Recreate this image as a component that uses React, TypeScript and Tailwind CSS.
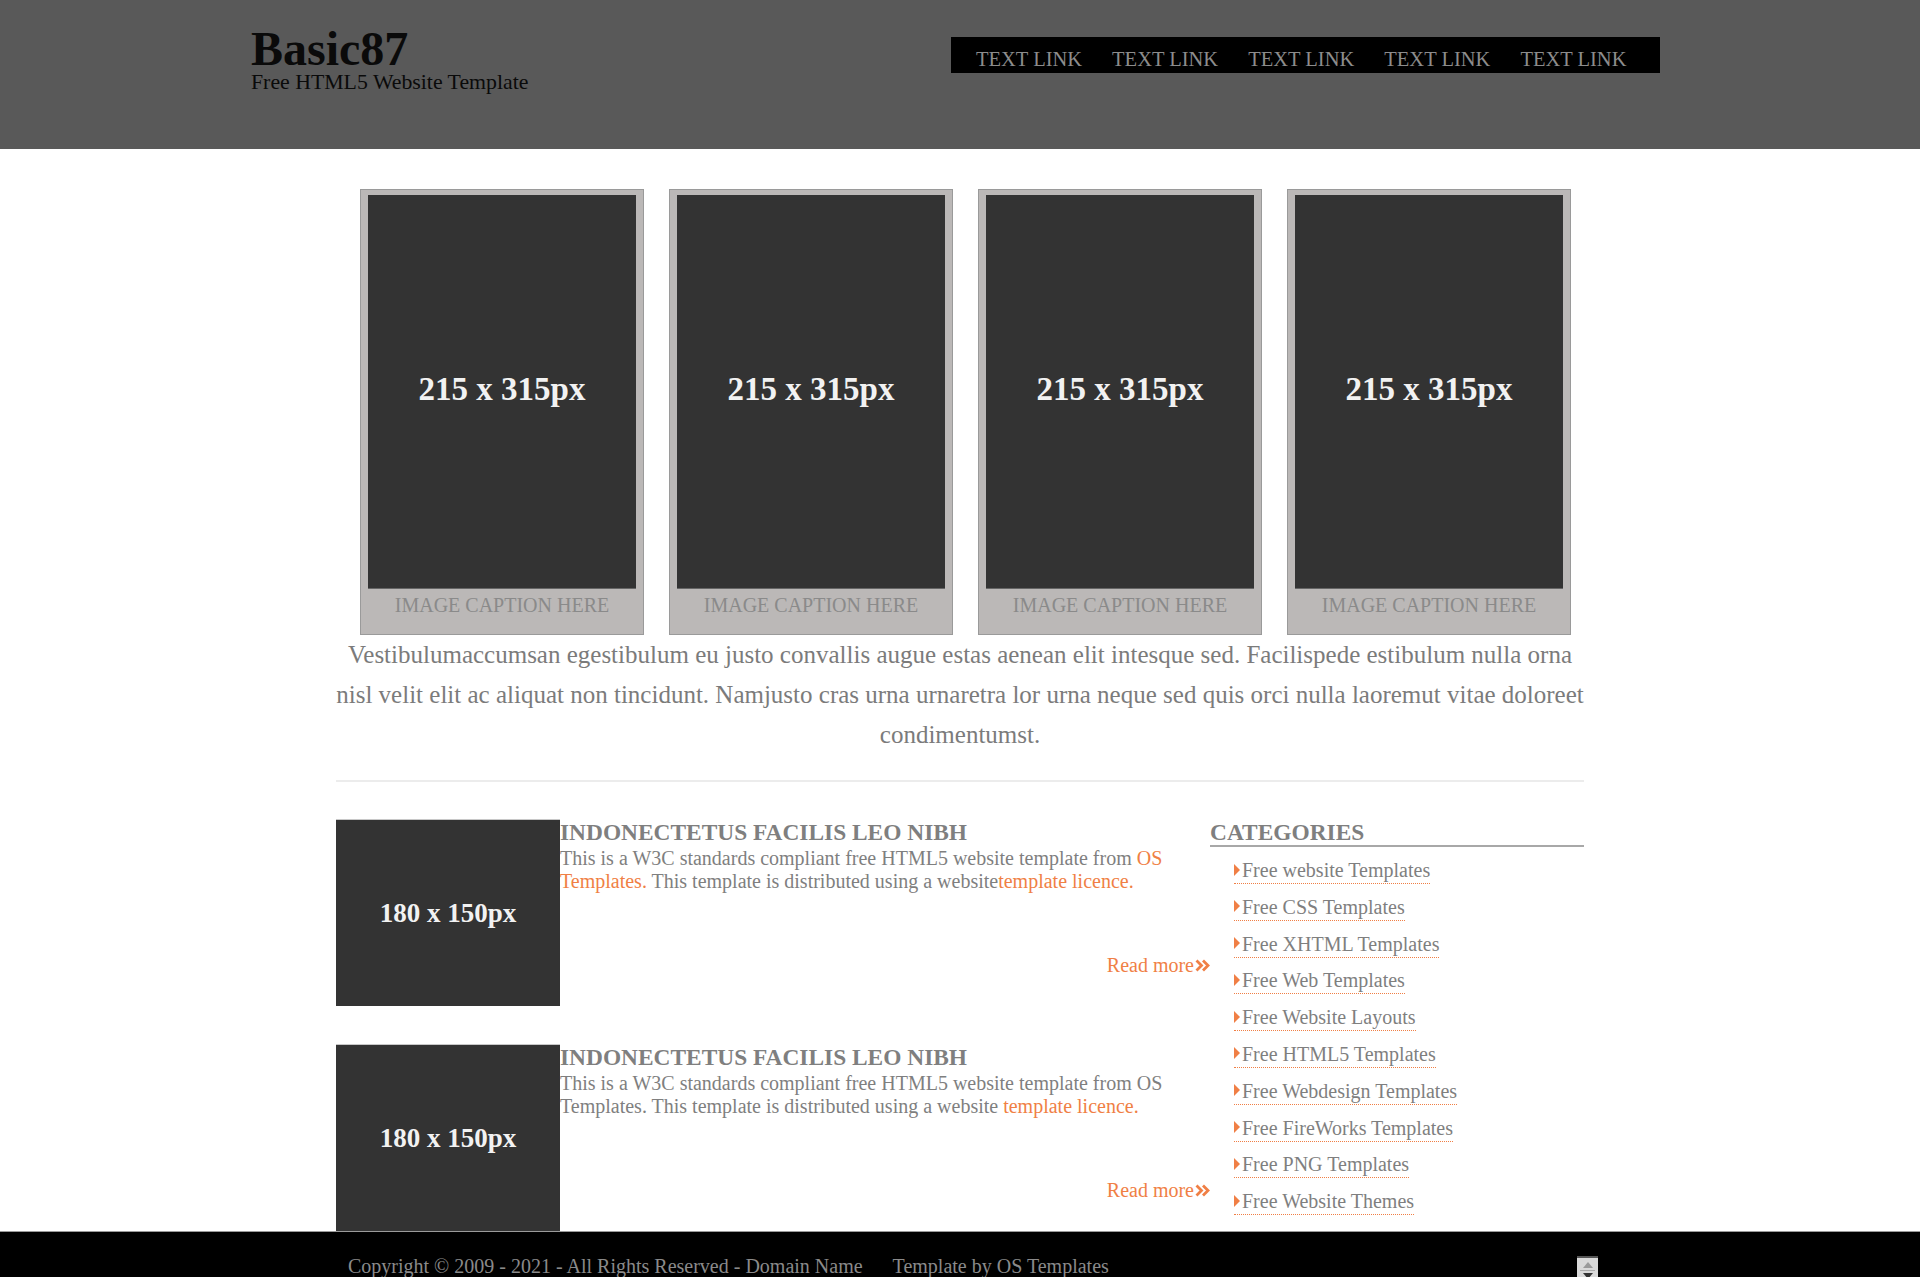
import React from 'react';

const navLinks = ['TEXT LINK', 'TEXT LINK', 'TEXT LINK', 'TEXT LINK', 'TEXT LINK'];

const categories = [
  'Free website Templates',
  'Free CSS Templates',
  'Free XHTML Templates',
  'Free Web Templates',
  'Free Website Layouts',
  'Free HTML5 Templates',
  'Free Webdesign Templates',
  'Free FireWorks Templates',
  'Free PNG Templates',
  'Free Website Themes',
];

function Chevrons() {
  return (
    <svg width="15" height="13" viewBox="0 0 15 13" className="ml-[1px]">
      <path d="M1.5 1.5 L6.5 6.5 L1.5 11.5" fill="none" stroke="#f07f45" strokeWidth="2.8" />
      <path d="M8 1.5 L13 6.5 L8 11.5" fill="none" stroke="#f07f45" strokeWidth="2.8" />
    </svg>
  );
}

function Card() {
  return (
    <div className="w-[284px] h-[446px] border border-[#9a9a9a] bg-[#bbb8b7] px-[7px] pt-[5px]">
      <div className="h-[394px] bg-[#333333] border-b border-[#666] flex items-center justify-center pb-[4px]">
        <span className="text-[33px] font-bold text-[#f2f2f2] leading-none">215 x 315px</span>
      </div>
      <p className="pt-[5px] text-center text-[20px] leading-[23px] text-[#8a8a8a]">IMAGE CAPTION HERE</p>
    </div>
  );
}

function Article({ children }: { children: React.ReactNode }) {
  return (
    <div className="flex">
      <div className="w-[224px] h-[187px] shrink-0 bg-[#333333] border-t border-[#c8c8c8] flex items-center justify-center">
        <span className="text-[27px] font-bold text-[#f2f2f2] leading-none">180 x 150px</span>
      </div>
      <div className="flex-1 flex flex-col">
        <h2 className="pt-[2px] text-[23.4px] leading-[23px] font-bold text-[#7f7f7f]">
          INDONECTETUS FACILIS LEO NIBH
        </h2>
        <p className="mt-[3px] text-[20px] leading-[23px] text-[#7f7f7f] pr-[40px]">{children}</p>
        <div className="mt-[61px] flex justify-end">
          <a className="flex items-center text-[20px] leading-[23px] text-[#f07f45]">
            Read more
            <Chevrons />
          </a>
        </div>
      </div>
    </div>
  );
}

export default function App() {
  return (
    <div className="h-[1277px] overflow-hidden bg-white font-['Liberation_Serif','Times_New_Roman',serif]">
      {/* Header */}
      <header className="h-[149px] bg-[#595959] flex items-start">
        <div className="ml-[251px] pt-[25px]">
          <h1 className="text-[48px] leading-none font-bold text-[#0a0a0a]">Basic87</h1>
          <p className="mt-[-1px] text-[21.8px] leading-none text-[#0a0a0a]">Free HTML5 Website Template</p>
        </div>
        <nav className="ml-auto mr-[260px] mt-[37px] h-[36px] w-[709px] bg-black pl-[25px] pt-[12px] flex gap-[30px]">
          {navLinks.map((l, i) => (
            <a key={i} className="text-[20.5px] leading-none text-[#8c8c8c]">
              {l}
            </a>
          ))}
        </nav>
      </header>

      {/* Main */}
      <main className="w-[1248px] mx-auto">
        <div className="mt-[40px] pl-[24px] flex gap-[25px]">
          <Card />
          <Card />
          <Card />
          <Card />
        </div>

        <div className="text-center text-[25px] leading-[40px] text-[#7b7b7b]">
          <p className="whitespace-nowrap">
            Vestibulumaccumsan egestibulum eu justo convallis augue estas aenean elit intesque sed. Facilispede
            estibulum nulla orna
          </p>
          <p className="whitespace-nowrap">
            nisl velit elit ac aliquat non tincidunt. Namjusto cras urna urnaretra lor urna neque sed quis orci nulla
            laoremut vitae doloreet
          </p>
          <p>condimentumst.</p>
        </div>

        <div className="mt-[25px] border-t-2 border-[#ececec]" />

        <div className="mt-[37px] flex">
          <div className="w-[874px] flex flex-col gap-[38px]">
            <Article>
              This is a W3C standards compliant free HTML5 website template from{' '}
              <a className="text-[#f07f45]">OS Templates.</a> This template is distributed using a website
              <a className="text-[#f07f45]">template licence.</a>
            </Article>
            <Article>
              This is a W3C standards compliant free HTML5 website template from OS Templates. This template is
              distributed using a website <a className="text-[#f07f45]">template licence.</a>
            </Article>
          </div>

          {/* Sidebar */}
          <aside className="w-[374px]">
            <h2 className="pt-[2px] pb-[1px] text-[23.4px] leading-[23px] font-bold text-[#7f7f7f] border-b-2 border-[#a8a8a8]">
              CATEGORIES
            </h2>
            <ul className="mt-[12px] pl-[24px] flex flex-col gap-[11.8px]">
              {categories.map(c => (
                <li key={c} className="flex">
                  <a className="flex items-center pb-[1px] border-b border-dotted border-[#f07f45] text-[20px] leading-[23px] text-[#7f7f7f]">
                    <span className="inline-block w-0 h-0 border-l-[6px] border-l-[#f07f45] border-y-[6px] border-y-transparent mr-[2px] mb-[2px]" />
                    {c}
                  </a>
                </li>
              ))}
            </ul>
          </aside>
        </div>
      </main>

      {/* Footer */}
      <footer className="relative h-[60px] bg-black border-t border-[#9a9a9a] overflow-hidden">
        <div className="w-[1248px] mx-auto pl-[12px] pt-[23px] flex gap-[30px] text-[20px] leading-[23px] text-[#8a8a8a]">
          <span>Copyright © 2009 - 2021 - All Rights Reserved - Domain Name</span>
          <span>Template by OS Templates</span>
        </div>
        <div className="absolute left-[1577px] top-[24px] w-[21px] h-[26px] bg-[#d9d9d9] border-t-2 border-[#555] flex flex-col items-center pt-[4px]">
          <span className="w-0 h-0 border-b-[6px] border-b-[#9a9a9a] border-x-[5px] border-x-transparent" />
          <span className="w-[15px] h-[1px] bg-[#aaa] my-[2px]" />
          <span className="w-0 h-0 border-t-[6px] border-t-[#333] border-x-[5px] border-x-transparent" />
        </div>
      </footer>
    </div>
  );
}
